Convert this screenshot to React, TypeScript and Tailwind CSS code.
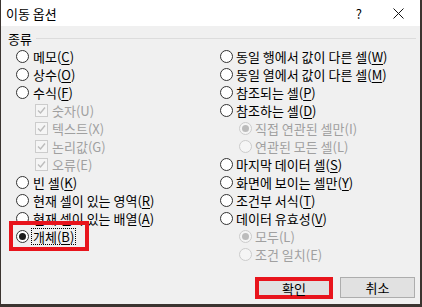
import React from "react";

const FONT = { fontFamily: '"Malgun Gothic", "Noto Sans CJK KR", "Noto Sans", sans-serif' };

function Radio({ checked = false, disabled = false }: { checked?: boolean; disabled?: boolean }) {
  return (
    <span
      className={
        "flex items-center justify-center w-[13px] h-[13px] rounded-full border shrink-0 " +
        (disabled ? "border-[#cccccc] bg-[#f5f5f5]" : "border-[#333333] bg-white")
      }
    >
      {checked && (
        <span className={"w-[7px] h-[7px] rounded-full " + (disabled ? "bg-[#bcbcbc]" : "bg-[#1a1a1a]")} />
      )}
    </span>
  );
}

function Check() {
  return (
    <span className="flex items-center justify-center w-[13px] h-[13px] border border-[#cccccc] bg-[#f5f5f5] shrink-0">
      <svg width="11" height="11" viewBox="0 0 11 11">
        <path d="M2 5.5 L4.5 8 L9 2.5" fill="none" stroke="#bcbcbc" strokeWidth="1.4" />
      </svg>
    </span>
  );
}

function Label({ text, m, disabled = false, focus = false }: { text: string; m: string; disabled?: boolean; focus?: boolean }) {
  return (
    <span
      className={
        "text-[13px] leading-[15px] whitespace-nowrap " +
        (disabled ? "text-[#a0a0a0]" : "text-black") +
        (focus ? " outline outline-1 outline-dotted outline-black px-[1px]" : "")
      }
    >
      {text}(
      <span className={disabled ? "" : "underline underline-offset-2"}>{m}</span>)
    </span>
  );
}

function Row({ children, indent = 0, gap = 4 }: { children: React.ReactNode; indent?: number; gap?: number }) {
  return (
    <div className="h-[18px] flex items-center" style={{ paddingLeft: indent, columnGap: gap }}>
      {children}
    </div>
  );
}

export default function App() {
  return (
    <div className="w-[422px] h-[307px] bg-[#3b3430] overflow-hidden" style={FONT}>
      <div className="ml-[1px] w-[419px] h-[304px] flex flex-col bg-[#f0f0f0]">
        {/* Title bar */}
        <div className="h-[26px] bg-white flex items-center pl-[5px] shrink-0">
          <span className="text-[13px] leading-[15px] text-black">이동 옵션</span>
          <span className="ml-auto text-[13px] leading-[15px] text-black mr-[31px]">?</span>
          <svg width="11" height="11" viewBox="0 0 11 11" className="mr-[16px]">
            <path d="M0.5 0.5 L10.5 10.5 M10.5 0.5 L0.5 10.5" stroke="#111" strokeWidth="1" />
          </svg>
        </div>

        {/* Group header */}
        <div className="h-[21px] flex items-center pl-[7px] pr-[4px] pt-[3px]">
          <span className="text-[13px] leading-[15px] text-black">종류</span>
          <span className="flex-1 h-px bg-[#dcdcdc] ml-[4px]" />
        </div>

        {/* Columns */}
        <div className="flex">
          <div className="w-[219px] pl-[15px] flex flex-col">
            <Row><Radio /><Label text="메모" m="C" /></Row>
            <Row><Radio /><Label text="상수" m="O" /></Row>
            <Row><Radio /><Label text="수식" m="F" /></Row>
            <Row indent={19} gap={4}><Check /><Label text="숫자" m="U" disabled /></Row>
            <Row indent={19} gap={4}><Check /><Label text="텍스트" m="X" disabled /></Row>
            <Row indent={19} gap={4}><Check /><Label text="논리값" m="G" disabled /></Row>
            <Row indent={19} gap={4}><Check /><Label text="오류" m="E" disabled /></Row>
            <Row><Radio /><Label text="빈 셀" m="K" /></Row>
            <Row><Radio /><Label text="현재 셀이 있는 영역" m="R" /></Row>
            <Row><Radio /><Label text="현재 셀이 있는 배열" m="A" /></Row>
            <div className="relative">
              <Row gap={3}><Radio checked /><Label text="개체" m="B" focus /></Row>
              <span className="absolute left-[-7px] top-[-6px] w-[80px] h-[30px] border-[4px] border-[#e8141c]" />
            </div>
          </div>
          <div className="flex-1 flex flex-col">
            <Row gap={3}><Radio /><Label text="동일 행에서 값이 다른 셀" m="W" /></Row>
            <Row gap={3}><Radio /><Label text="동일 열에서 값이 다른 셀" m="M" /></Row>
            <Row gap={3}><Radio /><Label text="참조되는 셀" m="P" /></Row>
            <Row gap={3}><Radio /><Label text="참조하는 셀" m="D" /></Row>
            <Row indent={19} gap={3}><Radio checked disabled /><Label text="직접 연관된 셀만" m="I" disabled /></Row>
            <Row indent={19} gap={3}><Radio disabled /><Label text="연관된 모든 셀" m="L" disabled /></Row>
            <Row gap={3}><Radio /><Label text="마지막 데이터 셀" m="S" /></Row>
            <Row gap={3}><Radio /><Label text="화면에 보이는 셀만" m="Y" /></Row>
            <Row gap={3}><Radio /><Label text="조건부 서식" m="T" /></Row>
            <Row gap={3}><Radio /><Label text="데이터 유효성" m="V" /></Row>
            <Row indent={19} gap={3}><Radio checked disabled /><Label text="모두" m="L" disabled /></Row>
            <Row indent={19} gap={3}><Radio disabled /><Label text="조건 일치" m="E" disabled /></Row>
          </div>
        </div>

        {/* Buttons */}
        <div className="flex justify-end items-start mt-[14px] pr-[5px] gap-[7px]">
          <button className="w-[78px] h-[22px] border-[4px] border-[#e8141c] bg-[#e1e1e1] text-[13px] leading-[15px] text-black flex items-center justify-center">
            확인
          </button>
          <button className="w-[75px] h-[21px] border border-[#adadad] bg-[#e1e1e1] text-[13px] leading-[15px] text-black flex items-center justify-center">
            취소
          </button>
        </div>
      </div>
    </div>
  );
}
